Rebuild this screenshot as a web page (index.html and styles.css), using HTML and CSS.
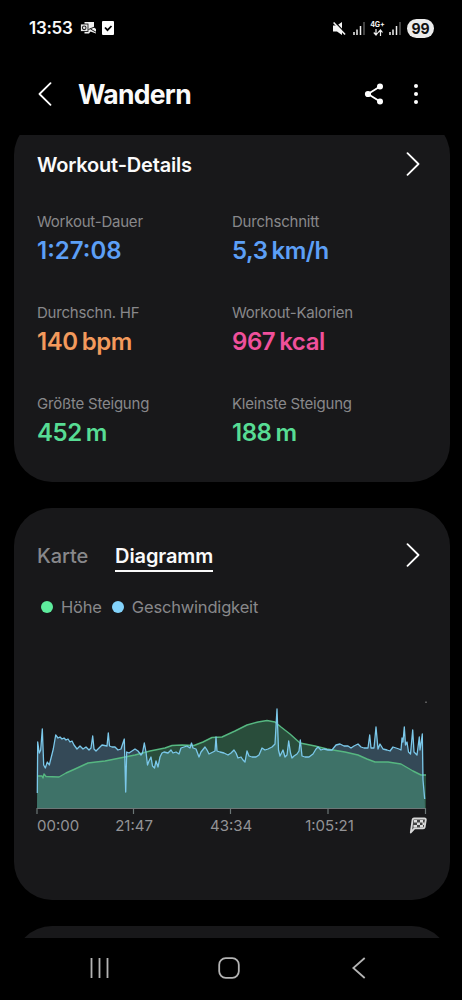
FILE: index.html
```html
<!DOCTYPE html>
<html lang="de">
	<head>
		<meta charset="utf-8">
		<meta name="viewport" content="width=device-width, initial-scale=1.0">
		<title>Wandern</title>
		<link rel="stylesheet" href="styles.css">
	</head>
	<body>
		<div class="status-bar">
			<span class="clock">13:53</span>
			<svg class="mail" width="17" height="14" viewBox="0 0 17 14">
				<path d="M4.500 1H14v5.500L16 8v4.500L10.500 10.500 9 12.500H4.500z" fill="#f0f0f0"/>
				<path d="M8.500 8.500L14.500 6M10.500 8l6 3.500" stroke="#000" stroke-width=".9"/>
				<rect x=".5" y="3" width="7.500" height="7.500" fill="#e8e8e8" stroke="#000" stroke-width=".8"/>
				<circle cx="4.200" cy="6.800" r="1.800" fill="none" stroke="#222" stroke-width="1.100"/>
			</svg>
			<svg class="check" width="12" height="14" viewBox="0 0 12 14">
				<rect width="12" height="14" rx="1" fill="#fff"/>
				<path d="M3 6.500l2.500 2.700L9.500 5" fill="none" stroke="#000" stroke-width="1.800"/>
			</svg>
			<div class="status-right">
				<svg class="mute" width="13" height="13" viewBox="0 0 13 13">
					<path d="M0 3.500h4L9 0v13L4 9.500H0z" fill="#f4f4f4"/>
					<path d="M1.800 0l11.500 12" stroke="#000" stroke-width="1.400"/>
					<path d="M.6 .5l11.500 12" stroke="#f4f4f4" stroke-width="1.500"/>
				</svg>
				<svg class="signal" width="12" height="13" viewBox="0 0 12 13">
					<path d="M1 10v3M4 7.500v5.500M7.500 4v9" stroke="#f0f0f0" stroke-width="1.500"/>
					<path d="M11 0v13" stroke="#666" stroke-width="1.300"/>
				</svg>
				<div class="network">
					<span>4G+</span>
					<svg width="10" height="7" viewBox="0 0 10 7">
						<path d="M3 0v6M.8 3.500L3 6l2-2.500M7.500 7V1M5.300 3.500l2.200-2.500 2 2.500" fill="none" stroke="#f0f0f0" stroke-width="1.200"/>
					</svg>
				</div>
				<svg class="signal" width="12" height="13" viewBox="0 0 12 13">
					<path d="M1 10v3M4 7.500v5.500M7.500 4v9" stroke="#f0f0f0" stroke-width="1.500"/>
					<path d="M11 0v13" stroke="#666" stroke-width="1.300"/>
				</svg>
				<span class="battery">99</span>
			</div>
		</div>

		<header>
			<svg class="back" width="14" height="24" viewBox="0 0 14 24">
				<path d="M12.500 1.200L1.500 12l11 10.800" fill="none" stroke="#fff" stroke-width="1.800" stroke-linecap="round" stroke-linejoin="round"/>
			</svg>
			<h1>Wandern</h1>
			<svg class="share" width="20" height="22" viewBox="0 0 20 22">
				<path d="M16 3.500L4 11l12 7.500" fill="none" stroke="#fff" stroke-width="1.800"/>
				<circle cx="16" cy="3.500" r="3" fill="#fff"/>
				<circle cx="4" cy="11" r="3.100" fill="#fff"/>
				<circle cx="16" cy="18.500" r="3" fill="#fff"/>
			</svg>
			<svg class="more" width="4" height="22" viewBox="0 0 4 22">
				<g fill="#fff">
					<circle cx="2" cy="3" r="2"/>
					<circle cx="2" cy="11" r="2"/>
					<circle cx="2" cy="19" r="2"/>
				</g>
			</svg>
		</header>

		<main>
			<section class="card details">
				<div class="card-head">
					<h2>Workout-Details</h2>
					<svg class="chevron" width="14" height="24" viewBox="0 0 14 24">
						<path d="M1.500 1.200L12.500 12l-11 10.800" fill="none" stroke="#fff" stroke-width="1.800" stroke-linecap="round" stroke-linejoin="round"/>
					</svg>
				</div>
				<div class="stats">
					<div class="stat blue">
						<div class="label">Workout-Dauer</div>
						<div class="value time">1:27:08</div>
					</div>
					<div class="stat blue">
						<div class="label">Durchschnitt</div>
						<div class="value">5,3<span>km/h</span></div>
					</div>
					<div class="stat orange">
						<div class="label">Durchschn. HF</div>
						<div class="value">140<span>bpm</span></div>
					</div>
					<div class="stat pink">
						<div class="label">Workout-Kalorien</div>
						<div class="value">967<span>kcal</span></div>
					</div>
					<div class="stat green">
						<div class="label">Größte Steigung</div>
						<div class="value">452<span>m</span></div>
					</div>
					<div class="stat green">
						<div class="label">Kleinste Steigung</div>
						<div class="value">188<span>m</span></div>
					</div>
				</div>
			</section>

			<section class="card diagram">
				<div class="card-head">
					<div class="tabs">
						<span class="tab">Karte</span>
						<span class="tab active">Diagramm</span>
					</div>
					<svg class="chevron" width="14" height="24" viewBox="0 0 14 24">
						<path d="M1.500 1.200L12.500 12l-11 10.800" fill="none" stroke="#fff" stroke-width="1.800" stroke-linecap="round" stroke-linejoin="round"/>
					</svg>
				</div>
				<div class="legend">
					<span class="dot height"></span><span class="name">Höhe</span>
					<span class="dot speed"></span><span class="name">Geschwindigkeit</span>
				</div>
				<svg class="chart" width="392" height="127" viewBox="36 690 392 127">
					<!-- speed -->
					<path fill="#81cfff" fill-opacity=".27" d="M37 808L37.700 742 39.300 753 40.700 750 42.300 729 43.700 765 45.300 768 47.300 762 49.300 765 51.300 757 53.300 749 55.700 735 58 738 60 737 62 739 64 738 66 740 68 739 70 742 72 741 74 745 77 749 80 746 83 749 86 747 89 750 91 748 92.700 736 94 749 96 751 99 748 102 745 107 746 108.300 733 109.500 746 112 747 115 747 118 750 121 749 124.300 739 125.700 792 126.700 752 129 753 132 751 135 749 138 751 141 755 142.500 753 144.300 743 146 752 147.500 765 149 761 151 757 152.500 766 154.500 768 156 761 158 767 160 757 162 753 164 752 168 753 171 750 173 753 176 752 179 754 181 748 184 747 187 746 190 748 191.500 743 193 748 196 749 199 757 201 752 205 747 207 750 209 754 213 752 215 751 216 737 217 751 220 752 224 753 228 755 231 753 234 750 236 753 238 758 241 757 243 760 245 762 247 751 249 756 252 757 256 757 259 755 262 748 265 750 268 749 272 747 275 744 277 709 278.500 750 280 756 283 750 285 757 287 755 288.700 741 290.500 753 292 758 294 756 297 754 299 751 300.300 740 302 756 305 757 309 757 313 754 316 749 318 747 321 750 324 749 328 750 332 750 336 745 340 744 344 746 348 746 351 748 354 746 358 744 361 747 364 748 368 748 369.700 735 371 748 374 748 376 727 378 749 380 744 383 749 387 750 390 751 393 747 396 748 399 749 401 750 402 738 403 742 404.300 727 405.500 745 407 742 408.500 752 410.500 754 412.700 730 414 752 417 755 419.300 737 420 750 421.500 740 422.300 734 423 780 424.700 799 425 808z"/>
					<!-- altitude -->
					<path fill="#5ee99b" fill-opacity=".26" d="M37 808V776L59 777 66 773 75 769 88 763 96 762 105 761 120 758 135 755 150 751 165 748 172 745.500 182 745 194 745.500 203 742 212 737.500 222 737 235 731 247 725 258 722 267 720.500 275 722 281 727 290 734 300 743 315 746 327 749 345 752 358 755 367 759 375 762 388 762 401 764 413 771 421 775 426 775V808z"/>
					<path fill="none" stroke="#56b781" stroke-width="1.400" stroke-linejoin="round" d="M37 776L42 776 43 778 44 774 46 776.500 59 777 66 773 75 769 88 763 96 762 105 761 120 758 135 755 150 751 165 748 172 745.500 182 745 194 745.500 203 742 212 737.500 222 737 235 731 247 725 258 722 267 720.500 275 722 281 727 290 734 300 743 315 746 327 749 345 752 358 755 367 759 375 762 388 762 401 764 413 771 421 775 426 775"/>
					<path fill="none" stroke="#7bc8ea" stroke-width="1.300" stroke-linejoin="round" d="M37.300 793L37.700 742 39.300 753 40.700 750 42.300 729 43.700 765 45.300 768 47.300 762 49.300 765 51.300 757 53.300 749 55.700 735 58 738 60 737 62 739 64 738 66 740 68 739 70 742 72 741 74 745 77 749 80 746 83 749 86 747 89 750 91 748 92.700 736 94 749 96 751 99 748 102 745 107 746 108.300 733 109.500 746 112 747 115 747 118 750 121 749 124.300 739 125.700 792 126.700 752 129 753 132 751 135 749 138 751 141 755 142.500 753 144.300 743 146 752 147.500 765 149 761 151 757 152.500 766 154.500 768 156 761 158 767 160 757 162 753 164 752 168 753 171 750 173 753 176 752 179 754 181 748 184 747 187 746 190 748 191.500 743 193 748 196 749 199 757 201 752 205 747 207 750 209 754 213 752 215 751 216 737 217 751 220 752 224 753 228 755 231 753 234 750 236 753 238 758 241 757 243 760 245 762 247 751 249 756 252 757 256 757 259 755 262 748 265 750 268 749 272 747 275 744 277 709 278.500 750 280 756 283 750 285 757 287 755 288.700 741 290.500 753 292 758 294 756 297 754 299 751 300.300 740 302 756 305 757 309 757 313 754 316 749 318 747 321 750 324 749 328 750 332 750 336 745 340 744 344 746 348 746 351 748 354 746 358 744 361 747 364 748 368 748 369.700 735 371 748 374 748 376 727 378 749 380 744 383 749 387 750 390 751 393 747 396 748 399 749 401 750 402 738 403 742 404.300 727 405.500 745 407 742 408.500 752 410.500 754 412.700 730 414 752 417 755 419.300 737 420 750 421.500 740 422.300 734 423 780 424.700 799"/>
					<!-- axis -->
					<path stroke="#6c7676" stroke-width="1.200" d="M36.500 808.500H426M37 808v6M133.500 808v6M230.500 808v6M328 808v6M425.500 808v6"/>
					<path stroke="#999" d="M426 701.500v1.500"/>
				</svg>
				<div class="axis">
					<span class="t1">00:00</span>
					<span class="t2">21:47</span>
					<span class="t3">43:34</span>
					<span class="t4">1:05:21</span>
					<svg class="flag" width="18" height="17" viewBox="0 0 18 17">
						<path d="M5 1.500h10.500q1.500 0 1.300 1.300l-1.200 7.500q-.2 1-1.400 1H5.500L1.800 15.500 3.600 2.700q.2-1.200 1.400-1.200z" fill="#444" stroke="#d8d8d8" stroke-width="1.800" stroke-linejoin="round"/>
						<path d="M5 3h3v2.500H5zM11 3h3v2.500h-3zM8 5.500h3V8H8zM13.500 5.500h2V8h-2zM4.500 8H8v2.500H4.500zM11 8h3v2.500h-3z" fill="#ddd"/>
					</svg>
				</div>
			</section>

			<section class="card"></section>
		</main>

		<nav>
			<svg class="recents" width="20" height="20" viewBox="0 0 20 20">
				<path d="M1.500 0v20M9.500 0v20M17.500 0v20" stroke="#b4b4b4" stroke-width="1.800"/>
			</svg>
			<svg class="home" width="22" height="22" viewBox="0 0 22 22">
				<rect x="1.200" y="1.200" width="19.600" height="19.600" rx="6.500" fill="none" stroke="#b4b4b4" stroke-width="1.800"/>
			</svg>
			<svg class="nav-back" width="14" height="22" viewBox="0 0 14 22">
				<path d="M12.700 1L1.300 11l11.400 10" fill="none" stroke="#b4b4b4" stroke-width="1.800"/>
			</svg>
		</nav>
	</body>
</html>
```

FILE: styles.css
```css
* {
	box-sizing: border-box;
}
body {
	margin: 0;
	width: 462px;
	height: 1000px;
	display: flex;
	flex-direction: column;
	overflow: hidden;
	background-color: #000;
	color: #fafafa;
	font-family: Inter, "Liberation Sans", sans-serif;
}
svg {
	display: block;
	flex: none;
}
h1, h2 {
	margin: 0;
}

/* status bar */
.status-bar {
	height: 56px;
	padding: 0 28px 0 29px;
	display: flex;
	align-items: center;
}
.clock {
	width: 51px;
	font-size: 17px;
	font-weight: 600;
	letter-spacing: -0.3px;
}
.check {
	margin-left: 5px;
}
.status-right {
	margin-left: auto;
	display: flex;
	align-items: center;
}
.mute {
	margin-right: 7px;
}
.network {
	width: 15px;
	margin: 0 4px 0 5px;
	display: flex;
	flex-direction: column;
	align-items: center;
	font-size: 7px;
	line-height: 8px;
	font-weight: 700;
}
.battery {
	width: 27px;
	height: 19px;
	margin-left: 6px;
	border-radius: 10px;
	background-color: #ececec;
	color: #111;
	font-size: 14px;
	line-height: 19px;
	font-weight: 700;
	text-align: center;
}

/* title bar */
header {
	height: 79px;
	padding: 0 44px 3px 38px;
	display: flex;
	align-items: center;
}
h1 {
	margin-left: 26px;
	font-size: 26.500px;
	font-weight: 700;
	letter-spacing: -0.700px;
}
.share {
	margin-left: auto;
}
.more {
	margin-left: 30px;
}

/* cards */
main {
	height: 803px;
	overflow: hidden;
	padding: 0 12.500px 0 13.500px;
}
.card {
	height: 392px;
	margin-bottom: 26px;
	padding: 0 23.500px;
	border-radius: 38px;
	background-color: #18181a;
}
.details {
	height: 365px;
	margin-top: -18px;
	padding-top: 31px;
}
.diagram {
	padding-top: 31px;
}
.card-head {
	height: 32px;
	padding-right: 6px;
	display: flex;
	align-items: center;
	justify-content: space-between;
}
h2 {
	padding-top: 2px;
	font-size: 20px;
	line-height: 24px;
	font-weight: 600;
	letter-spacing: -0.180px;
}
.stats {
	margin-top: 32px;
	display: grid;
	grid-template-columns: 195px 1fr;
	grid-auto-rows: 91px;
}
.label {
	font-size: 15px;
	line-height: 20px;
	letter-spacing: -0.220px;
	color: #88888b;
	white-space: nowrap;
}
.value {
	margin-top: 3px;
	font-size: 24px;
	line-height: 31px;
	font-weight: 600;
	letter-spacing: -0.450px;
	white-space: nowrap;
}
.value.time {
	letter-spacing: 0;
}
.value span {
	margin-left: 4px;
}
.blue .value {
	color: #5c9ff6;
}
.orange .value {
	color: #f39a5c;
}
.pink .value {
	color: #f0509b;
}
.green .value {
	color: #57dc94;
}

/* diagram */
.tabs {
	display: flex;
	gap: 27px;
}
.tab {
	height: 33px;
	padding-top: 1px;
	font-size: 20px;
	line-height: 32px;
	font-weight: 500;
	letter-spacing: -0.100px;
	color: #88888b;
}
.tab.active {
	font-weight: 600;
	color: #fafafa;
	border-bottom: 2px solid #fafafa;
}
.legend {
	height: 24px;
	margin: 24px 0 71px 4px;
	display: flex;
	align-items: center;
}
.dot {
	width: 12px;
	height: 12px;
	border-radius: 50%;
}
.dot.height {
	background-color: #5eec9d;
}
.dot.speed {
	background-color: #83d3fb;
	margin-left: 10px;
}
.name {
	margin-left: 8px;
	font-size: 16.500px;
	letter-spacing: -0.180px;
	color: #88888b;
}
.chart {
	margin-left: -1px;
}
.axis {
	height: 17px;
	display: flex;
	align-items: center;
	font-size: 15px;
	color: #939396;
}
.axis span {
	white-space: nowrap;
}
.t2 {
	margin-left: 36px;
}
.t3 {
	margin-left: 57px;
}
.t4 {
	margin-left: 53px;
}
.flag {
	margin-left: auto;
	margin-right: -1px;
}

/* navigation bar */
nav {
	height: 62px;
	padding: 0 96px 2px 90px;
	display: flex;
	align-items: center;
}
.home {
	margin-left: 108px;
}
.nav-back {
	margin-left: auto;
}
```
